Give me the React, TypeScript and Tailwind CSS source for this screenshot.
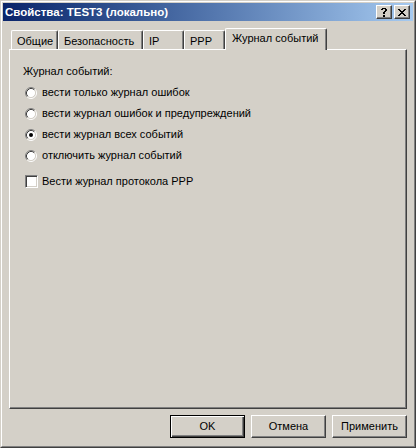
import React from "react";

const FONT = "font-['Liberation_Sans',Arial,sans-serif]";

function Radio({ checked }: { checked?: boolean }) {
  return (
    <svg width="12" height="12" viewBox="0 0 12 12" className="shrink-0">
      <circle cx="6" cy="6" r="4.5" fill="#ffffff" />
      <path d="M 2.11 9.89 A 5.5 5.5 0 0 1 9.89 2.11" fill="none" stroke="#808080" strokeWidth="1" />
      <path d="M 9.89 2.11 A 5.5 5.5 0 0 1 2.11 9.89" fill="none" stroke="#ffffff" strokeWidth="1" />
      <path d="M 2.82 9.18 A 4.5 4.5 0 0 1 9.18 2.82" fill="none" stroke="#404040" strokeWidth="1" />
      <path d="M 9.18 2.82 A 4.5 4.5 0 0 1 2.82 9.18" fill="none" stroke="#d4d0c8" strokeWidth="1" />
      {checked && <circle cx="6" cy="6" r="2" fill="#000000" />}
    </svg>
  );
}

function Pixels({ rows, w, h }: { rows: string[]; w: number; h: number }) {
  const rects: React.ReactNode[] = [];
  rows.forEach((r, y) =>
    r.split("").forEach((c, x) => {
      if (c === "X") rects.push(<rect key={`${x}-${y}`} x={x} y={y} width="1" height="1" fill="#000" />);
    })
  );
  return (
    <svg width={w} height={h} viewBox={`0 0 ${w} ${h}`} shapeRendering="crispEdges">
      {rects}
    </svg>
  );
}

function CaptionButton({ children }: { children: React.ReactNode }) {
  return (
    <div className="w-[16px] h-[14px] bg-[#d4d0c8] border-t border-l border-t-white border-l-white border-r border-b border-r-[#404040] border-b-[#404040] shadow-[inset_-1px_-1px_0_#808080] flex items-center justify-center">
      {children}
    </div>
  );
}

function Tab({ label, width, selected }: { label: string; width: number; selected?: boolean }) {
  if (selected) {
    return (
      <div
        className="relative z-10 h-[22px] mb-[-1px] bg-[#d4d0c8] border-t border-l border-t-white border-l-white border-r border-r-[#404040] shadow-[inset_-1px_0_0_#808080] rounded-t-[2px] flex justify-start pl-[6px] pt-[2px] text-[11px] leading-[14px] text-black"
        style={{ width }}
      >
        {label}
      </div>
    );
  }
  return (
    <div
      className="h-[19px] bg-[#d4d0c8] border-t border-l border-t-white border-l-white border-r border-r-[#404040] shadow-[inset_-1px_0_0_#808080] rounded-t-[2px] flex justify-start pl-[5px] pt-[3px] text-[11px] leading-[14px] text-black"
      style={{ width }}
    >
      {label}
    </div>
  );
}

function Button({ label, isDefault }: { label: string; isDefault?: boolean }) {
  if (isDefault) {
    return (
      <div className="w-[75px] h-[23px] bg-[#d4d0c8] border border-black shadow-[inset_1px_1px_0_#ffffff,inset_-1px_-1px_0_#404040,inset_-2px_-2px_0_#808080] flex items-center justify-center text-[11px] text-black">
        {label}
      </div>
    );
  }
  return (
    <div className="w-[75px] h-[23px] bg-[#d4d0c8] border-t border-l border-t-white border-l-white border-r border-b border-r-[#404040] border-b-[#404040] shadow-[inset_-1px_-1px_0_#808080] flex items-center justify-center text-[11px] text-black">
      {label}
    </div>
  );
}

export default function App() {
  return (
    <div className={`${FONT} w-[416px] h-[448px] bg-[#d4d0c8] border border-t-[#d4d0c8] border-l-[#d4d0c8] border-r-[#404040] border-b-[#404040] select-none`}>
      <div className="w-full h-full border border-t-white border-l-white border-r-[#808080] border-b-[#808080] p-px flex flex-col">
        {/* Title bar */}
        <div className="h-[18px] shrink-0 bg-gradient-to-r from-[#0a246a] to-[#a6caf0] flex items-center pl-[2px] pr-[3px]">
          <div className="flex-1 text-white font-bold text-[11.5px] leading-[14px] whitespace-nowrap">
            Свойства: TEST3 (локально)
          </div>
          <div className="flex items-center gap-[2px]">
            <CaptionButton>
              <Pixels
                w={6}
                h={9}
                rows={[".XXXX.", "XX..XX", "....XX", "...XX.", "..XX..", "..XX..", "......", "..XX..", "..XX.."]}
              />
            </CaptionButton>
            <CaptionButton>
              <Pixels
                w={8}
                h={7}
                rows={["XX....XX", ".XX..XX.", "..XXXX..", "...XX...", "..XXXX..", ".XX..XX.", "XX....XX"]}
              />
            </CaptionButton>
          </div>
        </div>

        {/* Body */}
        <div className="flex-1 flex flex-col px-[6px] pt-[7px]">
          <div className="h-[21px] flex items-end pl-[2px] whitespace-nowrap">
            <Tab label="Общие" width={47} />
            <Tab label="Безопасность" width={85} />
            <Tab label="IP" width={41} />
            <Tab label="PPP" width={41} />
            <Tab label="Журнал событий" width={102} selected />
          </div>
          <div className="h-[360px] bg-[#d4d0c8] border-t border-l border-t-white border-l-white border-r border-b border-r-[#404040] border-b-[#404040] shadow-[inset_-1px_-1px_0_#808080] pt-[11px] pl-[13px] text-[11px] text-black">
            <div className="h-[21px] flex items-center">Журнал событий:</div>
            <div className="pl-[2px]">
              {[
                ["вести только журнал ошибок", false],
                ["вести журнал ошибок и предупреждений", false],
                ["вести журнал всех событий", true],
                ["отключить журнал событий", false],
              ].map(([label, checked]) => (
                <div key={label as string} className="h-[21px] flex items-center gap-[5px]">
                  <Radio checked={checked as boolean} />
                  <span>{label as string}</span>
                </div>
              ))}
              <div className="h-[21px] mt-[5px] flex items-center gap-[4px]">
                <div className="w-[13px] h-[13px] bg-white border-t border-l border-t-[#808080] border-l-[#808080] border-r border-b border-r-white border-b-white shadow-[inset_1px_1px_0_#404040,inset_-1px_-1px_0_#d4d0c8]" />
                <span>Вести журнал протокола PPP</span>
              </div>
            </div>
          </div>
          <div className="mt-[6px] flex justify-end gap-[6px]">
            <Button label="OK" isDefault />
            <Button label="Отмена" />
            <Button label="Применить" />
          </div>
        </div>
      </div>
    </div>
  );
}
